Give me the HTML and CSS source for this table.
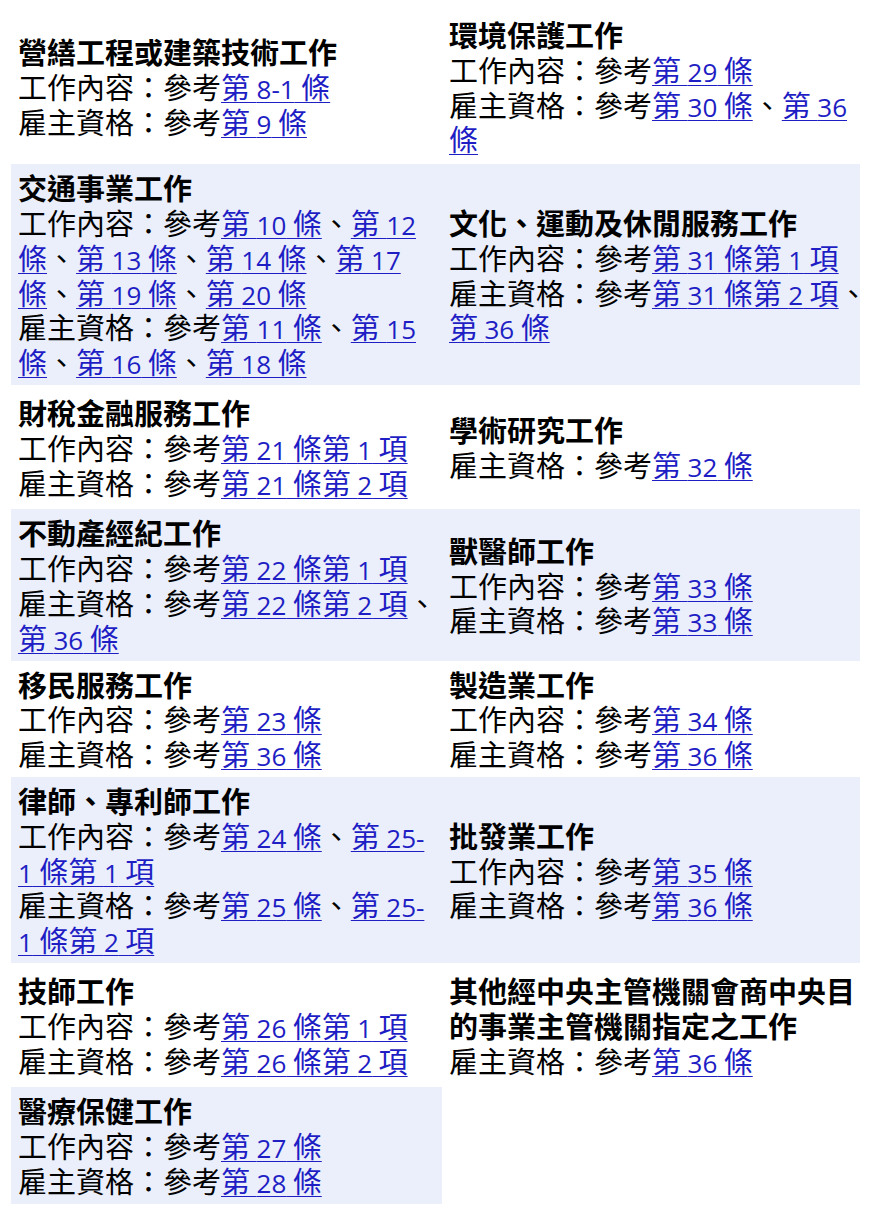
FILE: index.html
```html
<!DOCTYPE html>
<html lang="zh-Hant">
<head>
<meta charset="utf-8">
<title>工作類別</title>
<link rel="stylesheet" href="styles.css">
</head>
<body>
<div class="grid">
  <!-- row 1 -->
  <div class="cell first">
    <div class="title">營繕工程或建築技術工作</div>
    <div>工作內容：參考<a href="#">第 <span class="n">8-1</span> 條</a></div>
    <div>雇主資格：參考<a href="#">第 <span class="n">9</span> 條</a></div>
  </div>
  <div class="cell right first">
    <div class="title">環境保護工作</div>
    <div>工作內容：參考<a href="#">第 <span class="n">29</span> 條</a></div>
    <div>雇主資格：參考<a href="#">第 <span class="n">30</span> 條</a>、<a href="#">第 <span class="n">36</span><br>條</a></div>
  </div>

  <!-- row 2 -->
  <div class="cell alt">
    <div class="title">交通事業工作</div>
    <div>工作內容：參考<a href="#">第 <span class="n">10</span> 條</a>、<a href="#">第 <span class="n">12</span><br>條</a>、<a href="#">第 <span class="n">13</span> 條</a>、<a href="#">第 <span class="n">14</span> 條</a>、<a href="#">第 <span class="n">17</span><br>條</a>、<a href="#">第 <span class="n">19</span> 條</a>、<a href="#">第 <span class="n">20</span> 條</a></div>
    <div>雇主資格：參考<a href="#">第 <span class="n">11</span> 條</a>、<a href="#">第 <span class="n">15</span><br>條</a>、<a href="#">第 <span class="n">16</span> 條</a>、<a href="#">第 <span class="n">18</span> 條</a></div>
  </div>
  <div class="cell right alt">
    <div class="title">文化、運動及休閒服務工作</div>
    <div>工作內容：參考<a href="#">第 <span class="n">31</span> 條第 <span class="n">1</span> 項</a></div>
    <div>雇主資格：參考<a href="#">第 <span class="n">31</span> 條第 <span class="n">2</span> 項</a>、<br><a href="#">第 <span class="n">36</span> 條</a></div>
  </div>

  <!-- row 3 -->
  <div class="cell roomy">
    <div class="title">財稅金融服務工作</div>
    <div>工作內容：參考<a href="#">第 <span class="n">21</span> 條第 <span class="n">1</span> 項</a></div>
    <div>雇主資格：參考<a href="#">第 <span class="n">21</span> 條第 <span class="n">2</span> 項</a></div>
  </div>
  <div class="cell right roomy">
    <div class="title">學術研究工作</div>
    <div>雇主資格：參考<a href="#">第 <span class="n">32</span> 條</a></div>
  </div>

  <!-- row 4 -->
  <div class="cell alt">
    <div class="title">不動產經紀工作</div>
    <div>工作內容：參考<a href="#">第 <span class="n">22</span> 條第 <span class="n">1</span> 項</a></div>
    <div>雇主資格：參考<a href="#">第 <span class="n">22</span> 條第 <span class="n">2</span> 項</a>、<br><a href="#">第 <span class="n">36</span> 條</a></div>
  </div>
  <div class="cell right alt">
    <div class="title">獸醫師工作</div>
    <div>工作內容：參考<a href="#">第 <span class="n">33</span> 條</a></div>
    <div>雇主資格：參考<a href="#">第 <span class="n">33</span> 條</a></div>
  </div>

  <!-- row 5 -->
  <div class="cell">
    <div class="title">移民服務工作</div>
    <div>工作內容：參考<a href="#">第 <span class="n">23</span> 條</a></div>
    <div>雇主資格：參考<a href="#">第 <span class="n">36</span> 條</a></div>
  </div>
  <div class="cell right">
    <div class="title">製造業工作</div>
    <div>工作內容：參考<a href="#">第 <span class="n">34</span> 條</a></div>
    <div>雇主資格：參考<a href="#">第 <span class="n">36</span> 條</a></div>
  </div>

  <!-- row 6 -->
  <div class="cell alt">
    <div class="title">律師、專利師工作</div>
    <div>工作內容：參考<a href="#">第 <span class="n">24</span> 條</a>、<a href="#">第 <span class="n">25-</span><br><span class="n">1</span> 條第 <span class="n">1</span> 項</a></div>
    <div>雇主資格：參考<a href="#">第 <span class="n">25</span> 條</a>、<a href="#">第 <span class="n">25-</span><br><span class="n">1</span> 條第 <span class="n">2</span> 項</a></div>
  </div>
  <div class="cell right alt">
    <div class="title">批發業工作</div>
    <div>工作內容：參考<a href="#">第 <span class="n">35</span> 條</a></div>
    <div>雇主資格：參考<a href="#">第 <span class="n">36</span> 條</a></div>
  </div>

  <!-- row 7 -->
  <div class="cell roomy">
    <div class="title">技師工作</div>
    <div>工作內容：參考<a href="#">第 <span class="n">26</span> 條第 <span class="n">1</span> 項</a></div>
    <div>雇主資格：參考<a href="#">第 <span class="n">26</span> 條第 <span class="n">2</span> 項</a></div>
  </div>
  <div class="cell right roomy">
    <div class="title">其他經中央主管機關會商中央目<br>的事業主管機關指定之工作</div>
    <div>雇主資格：參考<a href="#">第 <span class="n">36</span> 條</a></div>
  </div>

  <!-- row 8 -->
  <div class="cell alt">
    <div class="title">醫療保健工作</div>
    <div>工作內容：參考<a href="#">第 <span class="n">27</span> 條</a></div>
    <div>雇主資格：參考<a href="#">第 <span class="n">28</span> 條</a></div>
  </div>
  <div class="cell right empty"></div>
</div>
</body>
</html>
```

FILE: styles.css
```css
html, body {
  margin: 0;
  padding: 0;
  background: #ffffff;
}

body {
  font-family: "Noto Sans CJK TC", "Noto Sans CJK JP", sans-serif;
  font-size: 29px;
  line-height: 34.8px;
  color: #000000;
}

.grid {
  display: grid;
  grid-template-columns: 431px 418px;
  margin: 11px 0 0 11px;
}

.cell {
  display: flex;
  flex-direction: column;
  justify-content: center;
  padding: 6px 0 6px 7px;
  white-space: nowrap;
}

.cell.first {
  padding-bottom: 8px;
}

.cell.roomy {
  padding-top: 10px;
  padding-bottom: 10px;
}

.cell.alt {
  background: #eaeffb;
}

.title {
  font-weight: 700;
}

a {
  color: #1e1ec4;
  text-decoration: underline;
  text-decoration-thickness: 1px;
  text-underline-offset: 3px;
}

.n {
  font-family: "Open Sans", "Liberation Sans", sans-serif;
  font-size: 26px;
  line-height: 0;
}
```
